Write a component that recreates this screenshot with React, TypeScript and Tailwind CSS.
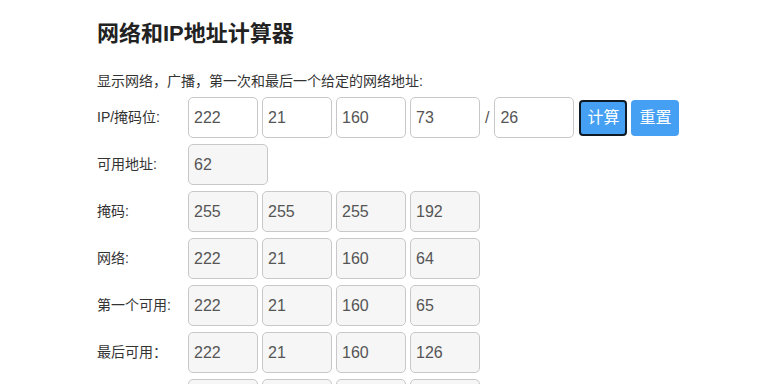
const font = { fontFamily: '"Liberation Sans", Arial, "Noto Sans CJK SC", sans-serif' };

type Row = { label: string; values: string[] };

const rows: Row[] = [
  { label: '掩码:', values: ['255', '255', '255', '192'] },
  { label: '网络:', values: ['222', '21', '160', '64'] },
  { label: '第一个可用:', values: ['222', '21', '160', '65'] },
  { label: '最后可用：', values: ['222', '21', '160', '126'] },
  { label: '广播:', values: ['222', '21', '160', '127'] },
];

function Field({ value, disabled, wide }: { value: string; disabled?: boolean; wide?: boolean }) {
  return (
    <input
      readOnly
      value={value}
      style={font}
      className={`h-[41px] rounded-[5px] border border-[#c8c8c8] px-[5px] text-[16px] text-[#555] outline-none ${
        wide ? 'w-[80px]' : 'w-[70px]'
      } ${disabled ? 'bg-[#f6f6f6]' : 'bg-white'}`}
    />
  );
}

export default function App() {
  return (
    <div style={font} className="min-h-screen bg-white pl-[97px] text-[#333]">
      <h1 className="pt-[21px] text-[22px] leading-[26px] font-bold text-[#222]">
        网络和IP地址计算器
      </h1>
      <p className="mt-[24px] text-[14px] leading-[20px]">
        显示网络，广播，第一次和最后一个给定的网络地址:
      </p>

      <div className="mt-[6px] flex flex-col gap-[6px]">
        <div className="flex h-[41px] items-center">
          <span className="w-[91px] text-[14px]">IP/掩码位:</span>
          <div className="flex items-center gap-[4px]">
            <Field value="222" />
            <Field value="21" />
            <Field value="160" />
            <Field value="73" />
            <span className="mx-[1px] text-[16px] text-[#555]">/</span>
            <Field value="26" wide />
            <button className="ml-[1px] h-[36px] rounded-[4px] border-2 border-[#0f1a24] bg-[#45a0f3] px-[6px] text-[16px] text-white">
              计算
            </button>
            <button className="h-[36px] rounded-[4px] border-2 border-transparent bg-[#45a0f3] px-[6px] text-[16px] text-white">
              重置
            </button>
          </div>
        </div>

        <div className="flex h-[41px] items-center">
          <span className="w-[91px] text-[14px]">可用地址:</span>
          <Field value="62" disabled wide />
        </div>

        {rows.map((row) => (
          <div key={row.label} className="flex h-[41px] items-center">
            <span className="w-[91px] text-[14px]">{row.label}</span>
            <div className="flex gap-[4px]">
              {row.values.map((v, i) => (
                <Field key={i} value={v} disabled />
              ))}
            </div>
          </div>
        ))}
      </div>
    </div>
  );
}
